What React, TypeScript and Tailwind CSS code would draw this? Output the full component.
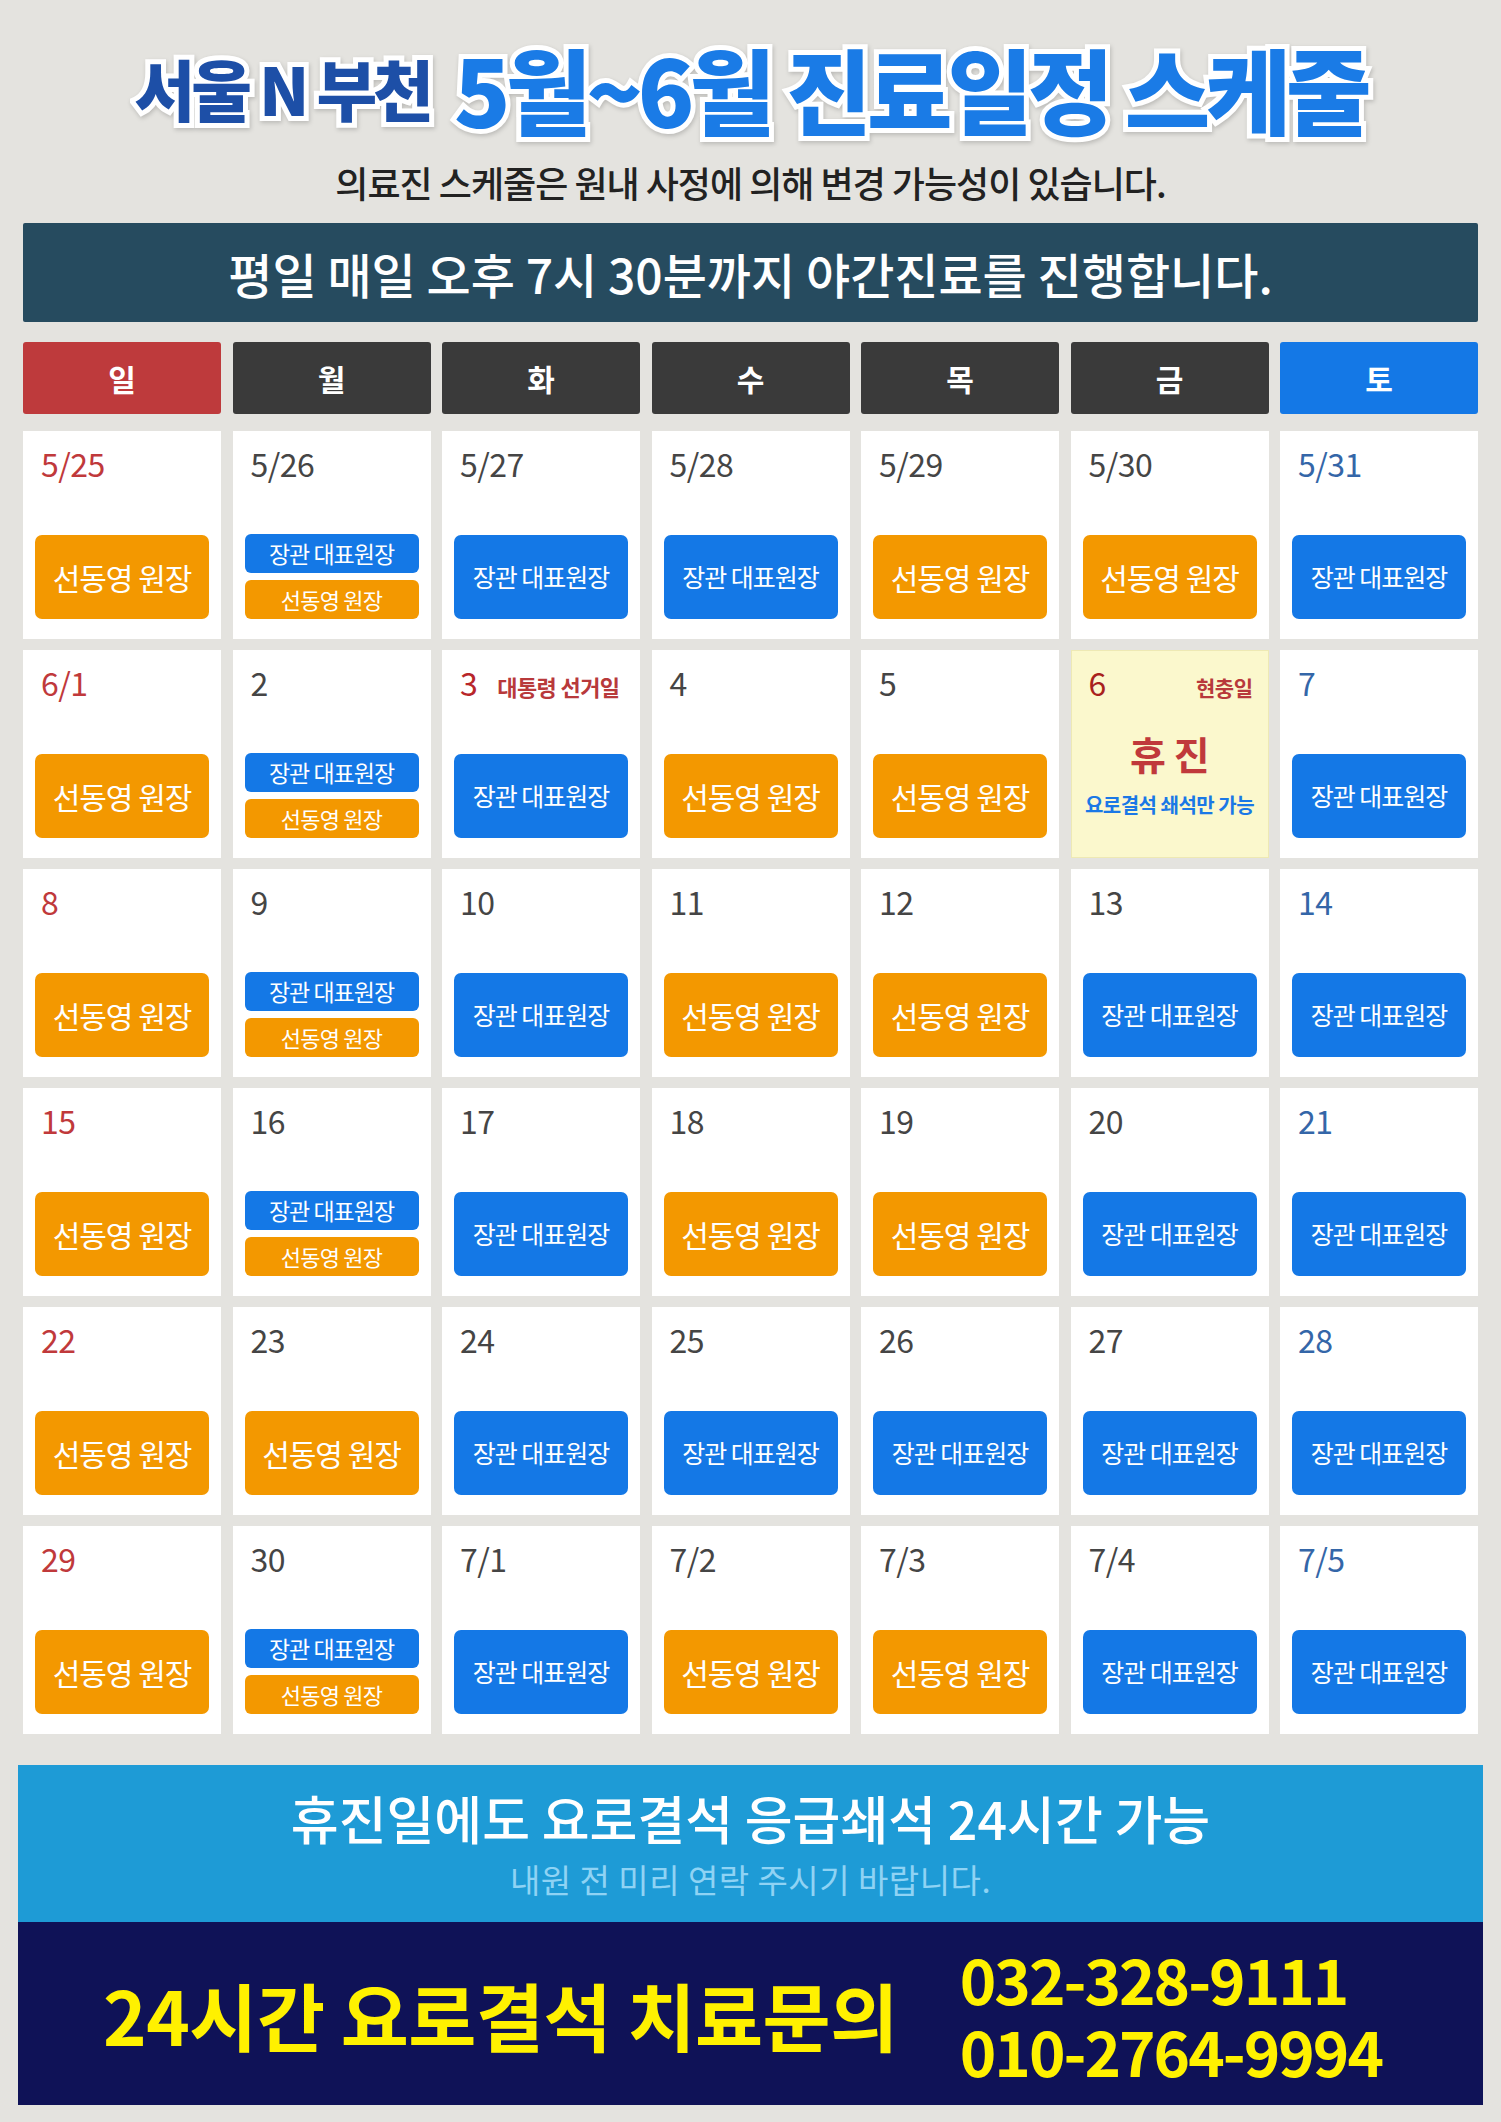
import React from 'react';

type Kind = 'S' | 'J' | 'D' | 'OFF';

interface Day {
    date: string;
    kind: Kind;
    note?: string;
}

const FONT = "font-['Noto_Sans_CJK_KR','Noto_Sans',sans-serif]";

const days: Day[][] = [
    [
        { date: '5/25', kind: 'S' }, { date: '5/26', kind: 'D' }, { date: '5/27', kind: 'J' }, { date: '5/28', kind: 'J' },
        { date: '5/29', kind: 'S' }, { date: '5/30', kind: 'S' }, { date: '5/31', kind: 'J' },
    ],
    [
        { date: '6/1', kind: 'S' }, { date: '2', kind: 'D' }, { date: '3', kind: 'J', note: '대통령 선거일' }, { date: '4', kind: 'S' },
        { date: '5', kind: 'S' }, { date: '6', kind: 'OFF', note: '현충일' }, { date: '7', kind: 'J' },
    ],
    [
        { date: '8', kind: 'S' }, { date: '9', kind: 'D' }, { date: '10', kind: 'J' }, { date: '11', kind: 'S' },
        { date: '12', kind: 'S' }, { date: '13', kind: 'J' }, { date: '14', kind: 'J' },
    ],
    [
        { date: '15', kind: 'S' }, { date: '16', kind: 'D' }, { date: '17', kind: 'J' }, { date: '18', kind: 'S' },
        { date: '19', kind: 'S' }, { date: '20', kind: 'J' }, { date: '21', kind: 'J' },
    ],
    [
        { date: '22', kind: 'S' }, { date: '23', kind: 'S' }, { date: '24', kind: 'J' }, { date: '25', kind: 'J' },
        { date: '26', kind: 'J' }, { date: '27', kind: 'J' }, { date: '28', kind: 'J' },
    ],
    [
        { date: '29', kind: 'S' }, { date: '30', kind: 'D' }, { date: '7/1', kind: 'J' }, { date: '7/2', kind: 'S' },
        { date: '7/3', kind: 'S' }, { date: '7/4', kind: 'J' }, { date: '7/5', kind: 'J' },
    ],
];

const weekdays = [
    { label: '일', bg: 'bg-[#be3a3c]' },
    { label: '월', bg: 'bg-[#3a3a3a]' },
    { label: '화', bg: 'bg-[#3a3a3a]' },
    { label: '수', bg: 'bg-[#3a3a3a]' },
    { label: '목', bg: 'bg-[#3a3a3a]' },
    { label: '금', bg: 'bg-[#3a3a3a]' },
    { label: '토', bg: 'bg-[#1478e6]' },
];

function dateColor(col: number) {
    if (col === 0) return 'text-[#c0393b]';
    if (col === 6) return 'text-[#3466a8]';
    return 'text-[#454545]';
}

function Badges({ kind }: { kind: Kind }) {
    if (kind === 'D') {
        return (
            <div className="flex flex-col gap-[7px]">
                <div className="h-[39px] rounded-[6px] bg-[#1478e6] flex items-center justify-center text-white text-[23px] tracking-[-1px]">
                    장관 대표원장
                </div>
                <div className="h-[39px] rounded-[6px] bg-[#f39800] flex items-center justify-center text-white text-[22px] tracking-[-0.8px]">
                    선동영 원장
                </div>
            </div>
        );
    }
    if (kind === 'S') {
        return (
            <div className="h-[84px] rounded-[7px] bg-[#f39800] flex items-center justify-center text-white text-[30px] tracking-[-1px]">
                선동영 원장
            </div>
        );
    }
    return (
        <div className="h-[84px] rounded-[7px] bg-[#1478e6] flex items-center justify-center text-white text-[25px] tracking-[-1px]">
            장관 대표원장
        </div>
    );
}

function Cell({ day, col }: { day: Day; col: number }) {
    if (day.kind === 'OFF') {
        return (
            <div className="h-[208px] bg-[#fbf8cd] border border-[#eee9b4] flex flex-col">
                <div className="flex items-baseline justify-between pl-[17px] pr-[15px] pt-[15px]">
                    <span className="text-[32px] leading-none text-[#a8221c]">{day.date}</span>
                    <span className="text-[21px] leading-none font-bold text-[#b8393b] tracking-[-0.5px]">{day.note}</span>
                </div>
                <div className="mt-[36px] text-center text-[39px] leading-none font-bold text-[#c0393b] tracking-[-0.5px]">휴 진</div>
                <div className="mt-[22px] text-center text-[20px] leading-none font-bold text-[#1a78e6] tracking-[-0.5px] whitespace-nowrap">
                    요로결석 쇄석만 가능
                </div>
            </div>
        );
    }
    return (
        <div className="h-[208px] bg-white flex flex-col px-[12px] pb-[20px]">
            <div className="flex items-baseline gap-[20px] pl-[6px] pt-[16px]">
                <span className={`text-[32px] leading-none tracking-[-0.5px] ${col === 2 && day.note ? 'text-[#b8262a]' : dateColor(col)}`}>
                    {day.date}
                </span>
                {day.note && (
                    <span className="text-[22px] leading-none font-bold text-[#b8393b] tracking-[-0.6px] whitespace-nowrap">{day.note}</span>
                )}
            </div>
            <div className="mt-auto">
                <Badges kind={day.kind} />
            </div>
        </div>
    );
}

export default function App() {
    return (
        <div className={`${FONT} w-[1501px] h-[2122px] bg-[#e4e3df] overflow-hidden`}>
            {/* title */}
            <div className="h-[140px] pt-[34px] flex items-center justify-center gap-[24px] whitespace-nowrap [paint-order:stroke_fill] [-webkit-text-stroke:10px_#ffffff] drop-shadow-[1px_2px_2px_rgba(0,0,0,0.18)]">
                <span className="text-[66px] leading-none font-black text-[#1d4fa7] tracking-[-4px]">서울 N 부천</span>
                <span className="text-[93px] leading-none font-black text-[#1a7be6] tracking-[-5px]">5월~6월 진료일정 스케줄</span>
            </div>
            <div className="h-[83px] flex items-center justify-center text-[36px] leading-none font-medium text-[#222] tracking-[-1px] whitespace-nowrap">
                의료진 스케줄은 원내 사정에 의해 변경 가능성이 있습니다.
            </div>

            <div className="mx-[23px] h-[99px] rounded-[2px] bg-[#264b5f] flex items-center justify-center text-white text-[48px] leading-none font-medium whitespace-nowrap">
                평일 매일 오후 7시 30분까지 야간진료를 진행합니다.
            </div>

            {/* calendar */}
            <div className="mx-[23px] mt-[20px] grid grid-cols-7 gap-x-[11.5px]">
                {weekdays.map((w) => (
                    <div key={w.label} className={`h-[72px] rounded-[3px] ${w.bg} flex items-center justify-center text-white text-[30px] font-bold leading-none`}>
                        {w.label}
                    </div>
                ))}
            </div>
            <div className="mx-[23px] mt-[17px] grid grid-cols-7 gap-x-[11.5px] gap-y-[11px]">
                {days.map((row, r) =>
                    row.map((day, c) => <Cell key={`${r}-${c}`} day={day} col={c} />)
                )}
            </div>

            {/* footer */}
            <div className="mx-[18px] mt-[31px]">
                <div className="h-[157px] bg-[#1e9bd6] flex flex-col items-center pt-[27px] whitespace-nowrap">
                    <div className="text-white text-[52px] leading-none font-medium">
                        휴진일에도 요로결석 응급쇄석 24시간 가능
                    </div>
                    <div className="mt-[19px] text-[#8fd3f4] text-[33px] leading-none tracking-[0.5px]">내원 전 미리 연락 주시기 바랍니다.</div>
                </div>
                <div className="h-[183px] bg-[#0f1257] flex items-center pl-[85px] whitespace-nowrap">
                    <div className="shrink-0 text-[#fff100] text-[74px] leading-none font-bold tracking-[-0.5px]">24시간 요로결석 치료문의</div>
                    <div className="shrink-0 ml-[62px] flex flex-col text-[#fff100] text-[62px] leading-[72px] font-bold tracking-[-2px]">
                        <span>032-328-9111</span>
                        <span>010-2764-9994</span>
                    </div>
                </div>
            </div>
        </div>
    );
}
